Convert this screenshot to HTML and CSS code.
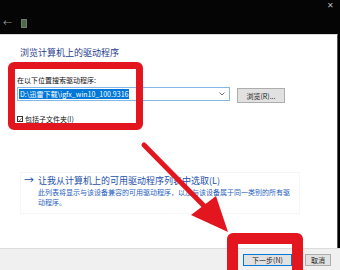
FILE: index.html
```html
<!DOCTYPE html>
<html lang="zh-CN">
<head>
    <meta charset="UTF-8">
    <meta name="viewport" content="width=device-width, initial-scale=1.0">
    <title>更新驱动程序</title>
    <link rel="stylesheet" href="styles.css">
</head>
<body>
    <div class="screen">
        <div class="topbar">
            <div class="close">✕</div>
            <div class="nav">
                <span class="back">←</span>
                <span class="device-icon"></span>
            </div>
        </div>

        <div class="content">
            <h1 class="title">浏览计算机上的驱动程序</h1>
            <p class="label">在以下位置搜索驱动程序:</p>
            <div class="path-row">
                <div class="path-input">
                    <span class="selected">D:\迅雷下载\igfx_win10_100.9316</span>
                    <svg class="chevron" width="6" height="4" viewBox="0 0 6 4">
                        <path d="M0.5 0.5 L3 3 L5.5 0.5" fill="none" stroke="#555" stroke-width="0.8"/>
                    </svg>
                </div>
                <div class="button browse">浏览(R)...</div>
            </div>
            <div class="check-row">
                <span class="checkbox">
                    <svg width="5" height="5" viewBox="0 0 5 5">
                        <path d="M0.6 2.6 L2 4 L4.5 0.8" fill="none" stroke="#222" stroke-width="0.8"/>
                    </svg>
                </span>
                <span>包括子文件夹(I)</span>
            </div>

            <div class="pick">
                <div class="pick-title"><span class="pick-arrow">→</span>让我从计算机上的可用驱动程序列表中选取(L)</div>
                <div class="pick-desc">此列表将显示与该设备兼容的可用驱动程序，以及与该设备属于同一类别的所有驱动程序。</div>
            </div>
        </div>

        <div class="footer">
            <div class="button next">下一步(N)</div>
            <div class="button cancel">取消</div>
        </div>

        <!-- 红色标注 -->
        <div class="mark mark-search"></div>
        <div class="mark mark-next"></div>
        <svg class="arrow" width="340" height="270" viewBox="0 0 340 270">
            <path d="M144 145 L208 210" stroke="#e3161f" stroke-width="5" stroke-linecap="round"/>
            <polygon points="191,215 216,196 228,232" fill="#e3161f"/>
        </svg>
    </div>
</body>
</html>
```

FILE: styles.css
```css
body {
    margin: 0;
    font-family: "Noto Sans CJK SC", "Noto Sans", sans-serif;
    background-color: #000;
}
.screen {
    position: relative;
    width: 340px;
    height: 270px;
    overflow: hidden;
    display: flex;
    flex-direction: column;
}
.topbar {
    height: 34px;
    background-color: #050505;
    position: relative;
}
.close {
    position: absolute;
    right: 6px;
    top: 0;
    font-size: 8px;
    color: #bbb;
    line-height: 10px;
}
.nav {
    display: flex;
    align-items: center;
    gap: 9px;
    padding: 18px 0 0 3px;
}
.back {
    font-size: 9px;
    color: #999;
    line-height: 10px;
}
.device-icon {
    width: 4px;
    height: 7px;
    background-color: #4a6a48;
    border: 1px solid #777;
}
.content {
    height: 213px;
    background-color: #fff;
    border-top: 1px solid #d9d9d9;
    border-right: 1px solid #555;
    margin-right: 2px;
    padding-left: 17px;
}
.title {
    margin: 12px 0 0 3px;
    font-size: 9px;
    font-weight: normal;
    line-height: 12px;
    color: #1f3d8e;
}
.label {
    margin: 16px 0 0 0;
    font-size: 7px;
    line-height: 10px;
    color: #111;
}
.path-row {
    display: flex;
    align-items: flex-start;
    gap: 7px;
    margin-top: 2px;
}
.path-input {
    border: 1px solid #86b6e6;
    display: flex;
    align-items: center;
    justify-content: space-between;
    padding: 0 4px 0 1px;
    box-sizing: border-box;
    width: 213px;
    height: 14px;
}
.selected {
    background-color: #0078d7;
    color: #fff;
    font-size: 7px;
    line-height: 10px;
    padding: 0 1px;
}
.button {
    background-color: #e1e1e1;
    border: 1px solid #adadad;
    font-size: 7px;
    color: #222;
    display: flex;
    align-items: center;
    justify-content: center;
    box-sizing: border-box;
}
.browse {
    width: 48px;
    height: 15px;
    margin-top: 1px;
}
.check-row {
    display: flex;
    align-items: center;
    gap: 2px;
    margin-top: 11px;
    font-size: 7px;
    line-height: 10px;
    color: #111;
}
.checkbox {
    width: 6px;
    height: 6px;
    border: 1px solid #333;
    box-sizing: border-box;
    display: flex;
    align-items: center;
    justify-content: center;
}
.pick {
    margin: 48px 0 0 3px;
    width: 280px;
    padding: 0 0 6px 3px;
    border: 1px solid #f6f6f6;
    box-sizing: border-box;
}
.pick-title {
    font-size: 9px;
    line-height: 13px;
    color: #1c4fa8;
}
.pick-arrow {
    display: inline-block;
    width: 14px;
    font-size: 10px;
}
.pick-desc {
    margin-top: 1px;
    padding: 0 8px 0 14px;
    font-size: 7px;
    line-height: 9.5px;
    color: #1f5fc0;
}
.footer {
    flex: 1;
    background-color: #f0f0f0;
    border-top: 1px solid #dcdcdc;
    display: flex;
    align-items: center;
    justify-content: flex-end;
    gap: 13px;
    padding-right: 9px;
}
.next {
    width: 49px;
    height: 12px;
    border-color: #0078d7;
}
.cancel {
    width: 26px;
    height: 12px;
}
.mark {
    position: absolute;
    border: 7px solid #e3161f;
    border-radius: 6px;
    box-sizing: border-box;
}
.mark-search {
    left: 8px;
    top: 62px;
    width: 135px;
    height: 68px;
}
.mark-next {
    left: 227px;
    top: 233px;
    width: 76px;
    height: 50px;
    border-width: 11px;
}
.arrow {
    position: absolute;
    left: 0;
    top: 0;
}
```
